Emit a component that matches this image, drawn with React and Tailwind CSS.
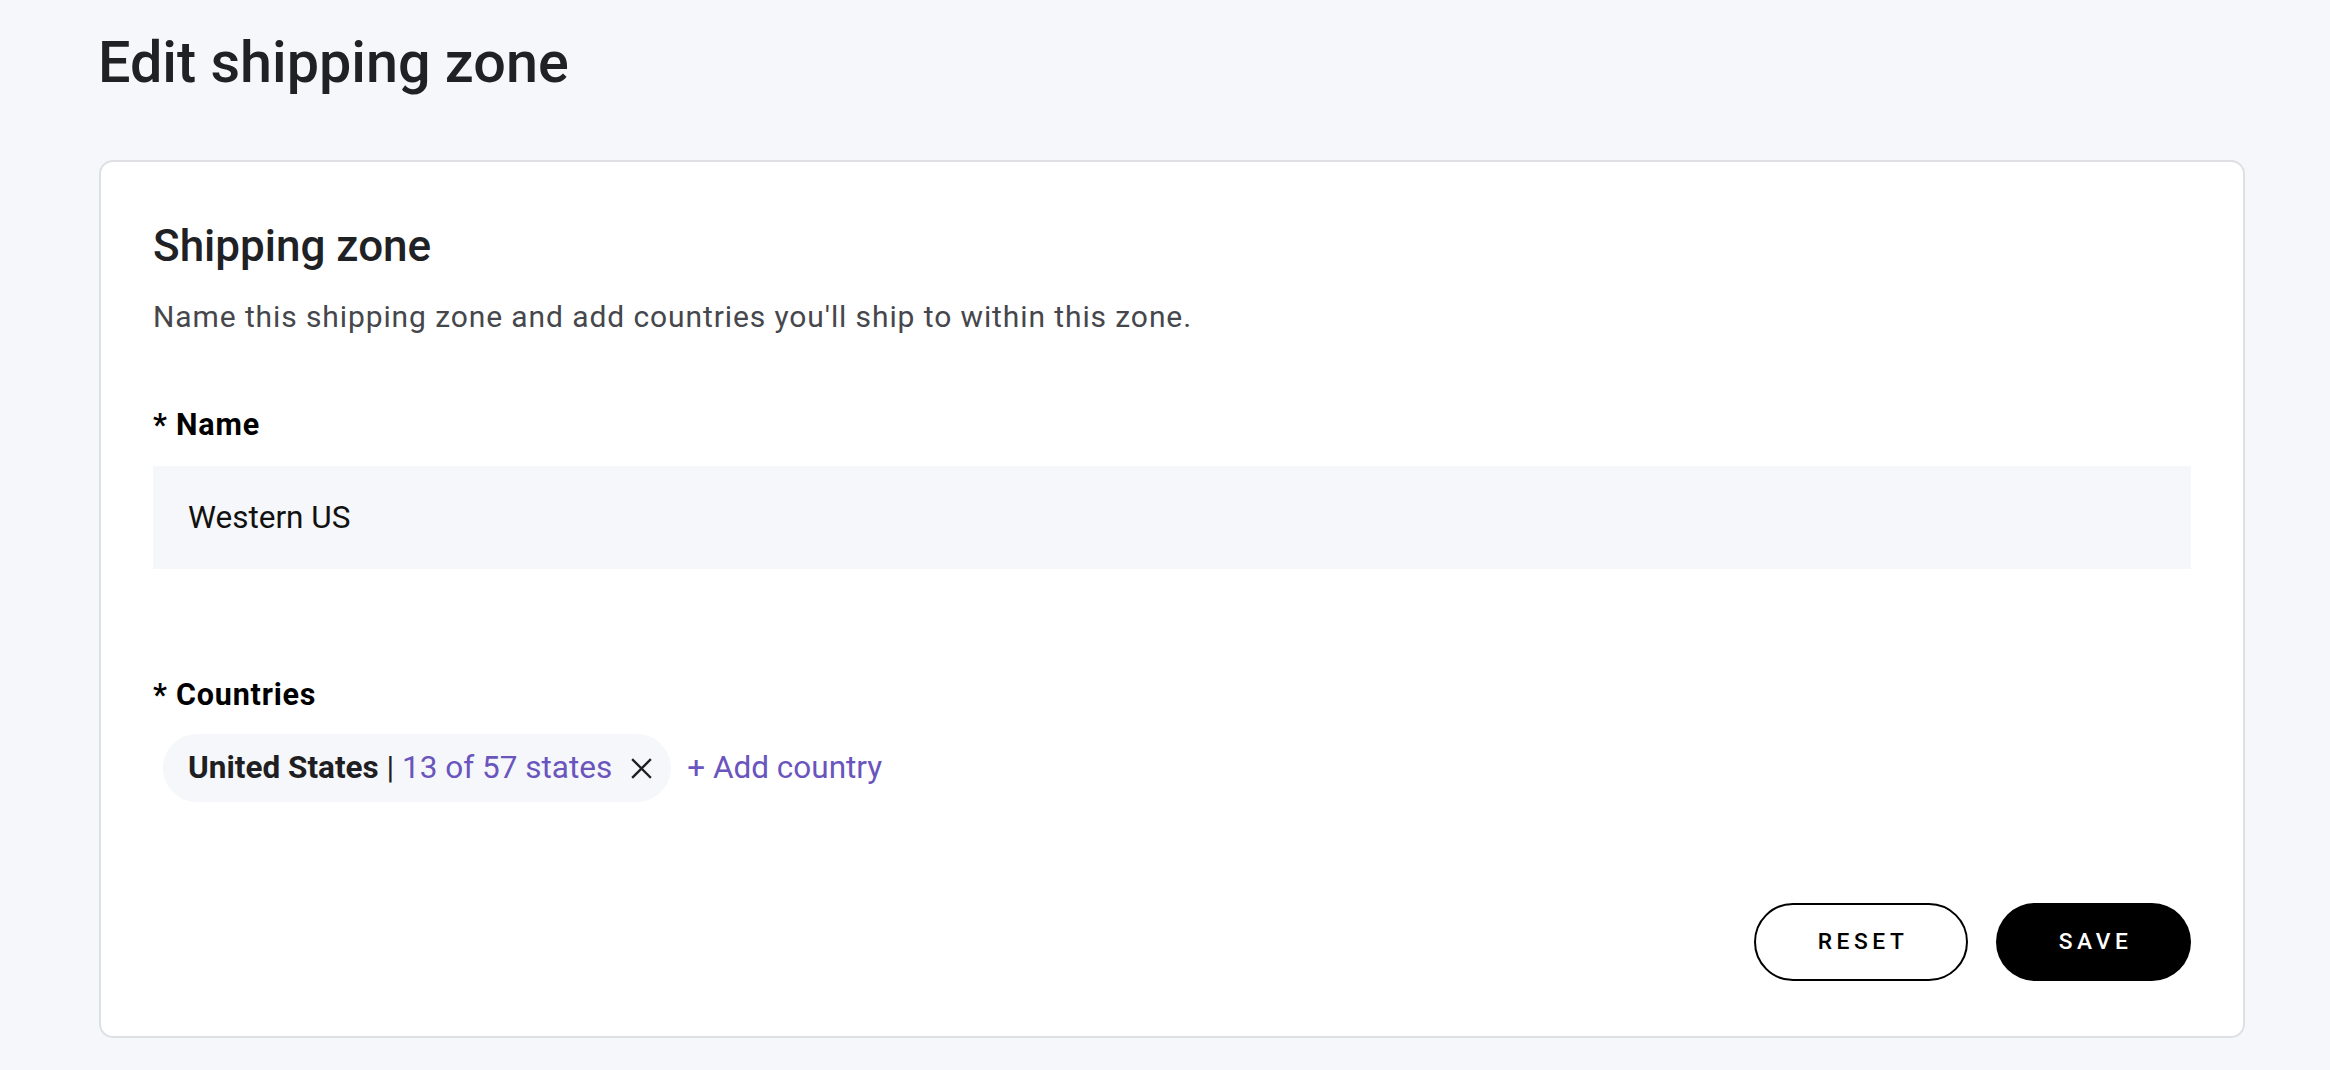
import { useState } from "react";

function CloseIcon() {
  return (
    <svg width="21" height="21" viewBox="0 0 21 21" fill="none">
      <path d="M2 2L19 19M19 2L2 19" stroke="#1f1f23" strokeWidth="2.4" strokeLinecap="square" />
    </svg>
  );
}

function CountryChip({ name, selected, total }) {
  return (
    <div className="ml-[10px] flex h-[68px] items-center rounded-full bg-[#f6f7fa] pl-[25px] pr-[19px] text-[31.5px] leading-none">
      <span className="font-bold text-[#1f1f23]">{name}</span>
      <span className="whitespace-pre text-[#1f1f23]"> | </span>
      <span className="text-[#6a54bd]">
        {selected} of {total} states
      </span>
      <button className="ml-[19px] flex items-center">
        <CloseIcon />
      </button>
    </div>
  );
}

export default function App() {
  const [name, setName] = useState("Western US");

  return (
    <div
      className="min-h-[1070px] bg-[#f6f7fa] pb-[36px] pl-[99px] pr-[85px] pt-[31px]"
      style={{ fontFamily: "Roboto, 'Liberation Sans', sans-serif" }}
    >
      <h1 className="-ml-[1px] text-[57.5px] font-medium leading-[64px] text-[#202124]">Edit shipping zone</h1>

      <div className="mt-[65px] rounded-[14px] border-2 border-[#dfe0e4] bg-white px-[52px] pb-[55px] pt-[59px]">
        <h2 className="text-[44px] font-medium leading-[50px] text-[#202124]">Shipping zone</h2>
        <p className="mt-[24px] text-[30px] leading-[44px] tracking-[0.9px] text-[#46474c]">
          Name this shipping zone and add countries you'll ship to within this zone.
        </p>

        <label className="mt-[66px] block text-[30.5px] font-bold leading-[40px] tracking-[0.8px] text-black">
          * Name
        </label>
        <input
          value={name}
          onChange={(e) => setName(e.target.value)}
          className="mt-[21px] block h-[103px] w-full bg-[#f6f7fa] px-[35px] text-[31.5px] text-[#111] outline-none"
        />

        <label className="mt-[106px] block text-[30.5px] font-bold leading-[40px] tracking-[0.8px] text-black">
          * Countries
        </label>
        <div className="mt-[19px] flex items-center gap-[16px]">
          <CountryChip name="United States" selected={13} total={57} />
          <button className="text-[31.5px] leading-none text-[#6a54bd]">+ Add country</button>
        </div>

        <div className="mt-[101px] flex justify-end gap-[28px]">
          <button className="h-[78px] w-[214px] rounded-full border-2 border-black pl-[4px] text-[22.75px] font-medium tracking-[0.2em] text-black">
            RESET
          </button>
          <button className="h-[78px] w-[195px] rounded-full bg-black pl-[4px] text-[22.75px] font-medium tracking-[0.2em] text-white">
            SAVE
          </button>
        </div>
      </div>
    </div>
  );
}
